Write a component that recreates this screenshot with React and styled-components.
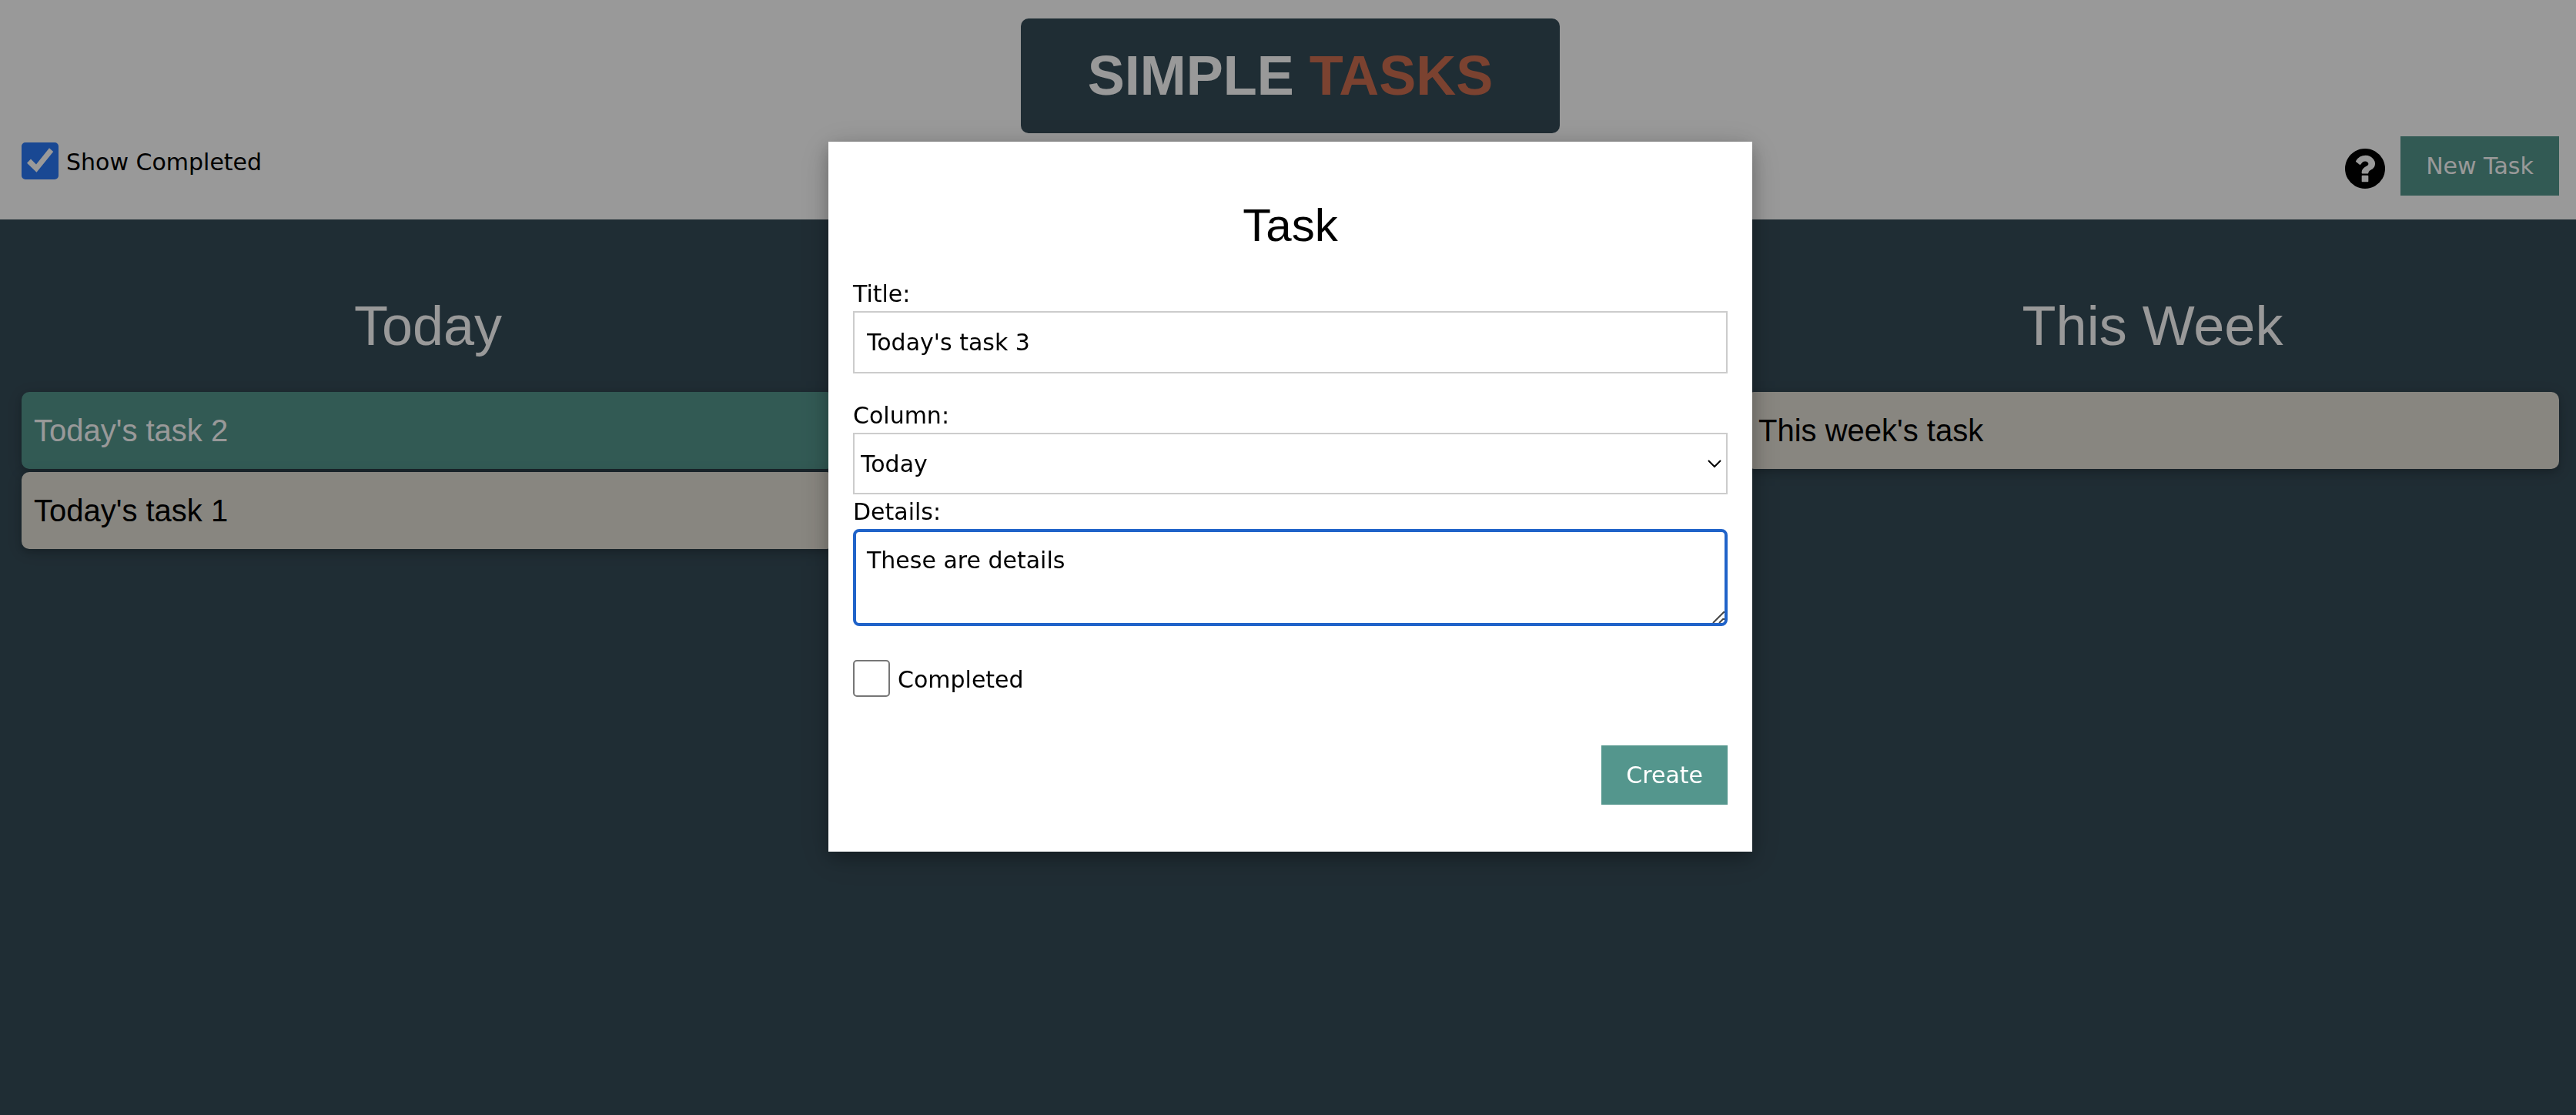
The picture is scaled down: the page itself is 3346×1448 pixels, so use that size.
import React, { useState } from "react";
import styled, { createGlobalStyle } from "styled-components";

const sans = `Verdana, "DejaVu Sans", sans-serif`;
const heading = `Arial, "Liberation Sans", sans-serif`;

const GlobalStyle = createGlobalStyle`
  *, *::before, *::after { box-sizing: border-box; }
  html { background: #354b57; }
  body {
    margin: 0;
    font-family: ${sans};
    font-size: 30px;
    line-height: 45px;
    color: #000;
  }
`;

const Page = styled.div`
  min-height: 100vh;
  background: #354b57;
`;

const Header = styled.header`
  padding: 24px 22px 31px 28px;
  background: #fff;
`;

const Logo = styled.h1`
  width: 700px;
  max-width: 100%;
  margin: 0 auto 4px;
  padding: 20px 0 21px;
  border-radius: 10px;
  background: #354b57;
  color: #fff;
  font: bold 72px/108px ${heading};
  text-align: center;

  span { color: #cd6e50; }
`;

const Toolbar = styled.div`
  display: flex;
  align-items: flex-start;
  justify-content: space-between;
`;

const Filter = styled.div`
  padding-top: 8px;
`;

const Actions = styled.div`
  display: flex;
  align-items: center;
  gap: 20px;
`;

const IconButton = styled.button`
  display: flex;
  margin: 6px 0 0;
  padding: 0;
  border: 0;
  background: none;
  color: #000;
`;

const Button = styled.button`
  min-width: ${(p) => (p.$wide ? "206px" : "0")};
  padding: 16px 32px;
  border: 0;
  background: #54968d;
  color: #fff;
  font: 30px/45px ${sans};
`;

const CheckLabel = styled.label`
  display: flex;
  align-items: center;
  gap: 10px;
`;

const CheckText = styled.span`
  padding-top: 2px;
`;

const CheckCell = styled.span`
  display: grid;

  > * { grid-area: 1 / 1; }
  svg { pointer-events: none; }
`;

const CheckInput = styled.input`
  appearance: none;
  width: 48px;
  height: 48px;
  margin: 0;
  border: 2px solid #767676;
  border-radius: 5px;
  background: #fff;

  &:checked {
    border-color: #2b79f6;
    background: #2b79f6;
  }
`;

const Board = styled.main`
  display: grid;
  grid-template-columns: repeat(3, 1fr);
  gap: 64px;
  padding: 84px 22px 64px 28px;
`;

const Column = styled.section`
  display: flex;
  flex-direction: column;
  gap: 4px;
`;

const ColumnTitle = styled.h2`
  margin: 0 0 28px;
  color: #fff;
  font: 72px/108px ${heading};
  text-align: center;
`;

const Card = styled.article`
  padding: 20px 16px;
  border-radius: 10px;
  background: ${(p) => (p.$done ? "#54968d" : "#e3dfd5")};
  color: ${(p) => (p.$done ? "#fff" : "#000")};
  font: 40px/60px ${heading};
  box-shadow: 0 4px 10px rgba(0, 0, 0, 0.16), 0 4px 20px rgba(0, 0, 0, 0.12);
`;

const Overlay = styled.div`
  position: fixed;
  inset: 0;
  display: flex;
  align-items: flex-start;
  justify-content: center;
  padding: 184px 0 64px 6px;
  overflow: auto;
  background: rgba(0, 0, 0, 0.4);
`;

const Dialog = styled.form`
  display: flex;
  flex-direction: column;
  width: 1200px;
  max-width: 100%;
  padding: 64px 32px 61px;
  background: #fff;
  box-shadow: 0 8px 20px rgba(0, 0, 0, 0.2), 0 8px 40px rgba(0, 0, 0, 0.19);
`;

const DialogTitle = styled.h2`
  margin: 0 0 21px;
  font: 60px/90px ${heading};
  text-align: center;
`;

const fieldText = `
  display: block;
  width: 100%;
  margin: 0;
  border-radius: 0;
  background: #fff;
  color: #000;
  font: 30px/45px ${sans};
  outline: none;
`;

const TextInput = styled.input`
  ${fieldText}
  height: 81px;
  margin-bottom: 32px;
  padding: 16px;
  border: 2px solid #ccc;
`;

const Overlaid = styled.div`
  display: grid;

  > * { grid-area: 1 / 1; }
  svg { pointer-events: none; }
`;

const Chevron = styled.svg`
  place-self: center end;
  margin-right: 8px;
`;

const Grip = styled.svg`
  place-self: end;
  margin: 0 4px 4px 0;
`;

const Select = styled.select`
  ${fieldText}
  appearance: none;
  height: 80px;
  padding: 16px 8px;
  border: 2px solid #ccc;
`;

const TextArea = styled.textarea`
  ${fieldText}
  height: 126px;
  padding: 14px;
  border: 4px solid #2063c9;
  border-radius: 8px;
  resize: none;
`;

const CompletedRow = styled.div`
  padding: 44px 0 63px;
`;

const DialogActions = styled.div`
  display: flex;
  justify-content: flex-end;
`;

function Checkbox({ id, label, defaultChecked = false }) {
  const [checked, setChecked] = useState(defaultChecked);
  return (
    <CheckLabel htmlFor={id}>
      <CheckCell>
        <CheckInput id={id} type="checkbox" checked={checked} onChange={(e) => setChecked(e.target.checked)} />
        {checked && (
          <svg width="48" height="48" viewBox="0 0 48 48" aria-hidden="true">
            <path d="M7 26.7L12 21.5L19 28.5L36 7.2L41.2 12L19.5 38.8Z" fill="#fff" />
          </svg>
        )}
      </CheckCell>
      <CheckText>{label}</CheckText>
    </CheckLabel>
  );
}

function HelpIcon() {
  return (
    <svg width="52" height="52" viewBox="128 128 1536 1536" aria-hidden="true">
      <path
        fill="currentColor"
        fillRule="evenodd"
        d="M1024 1376v-192q0-14-9-23t-23-9h-192q-14 0-23 9t-9 23v192q0 14 9 23t23 9h192q14 0 23-9t9-23zm256-672q0-88-55.5-163t-138.5-116-170-41q-243 0-371 213-15 24 8 42l132 100q7 6 19 6 16 0 25-12 53-68 86-92 34-24 86-24 48 0 85.5 26t37.5 59q0 38-20 61t-68 45q-63 28-115.5 86.5t-52.5 125.5v36q0 14 9 23t23 9h192q14 0 23-9t9-23q0-19 21.5-49.5t54.5-49.5q32-18 49-28.5t46-35 44.5-48 28-60.5 12.5-81zm384 192q0 209-103 385.5t-279.5 279.5-385.5 103-385.5-103-279.5-279.5-103-385.5 103-385.5 279.5-279.5 385.5-103 385.5 103 279.5 279.5 103 385.5z"
      />
    </svg>
  );
}

const columns = [
  { title: "Today", tasks: [{ name: "Today's task 2", done: true }, { name: "Today's task 1" }] },
  { title: "", tasks: [] },
  { title: "This Week", tasks: [{ name: "This week's task" }] },
];

export default function App() {
  return (
    <>
      <GlobalStyle />
      <Page>
        <Header>
          <Logo>SIMPLE <span>TASKS</span></Logo>
          <Toolbar>
            <Filter>
              <Checkbox id="show-completed" label="Show Completed" defaultChecked />
            </Filter>
            <Actions>
              <IconButton type="button"><HelpIcon /></IconButton>
              <Button type="button" $wide>New Task</Button>
            </Actions>
          </Toolbar>
        </Header>
        <Board>
          {columns.map((column, i) => (
            <Column key={i}>
              {column.title && <ColumnTitle>{column.title}</ColumnTitle>}
              {column.tasks.map((task) => (
                <Card key={task.name} $done={task.done}>{task.name}</Card>
              ))}
            </Column>
          ))}
        </Board>
      </Page>
      <Overlay>
        <Dialog role="dialog" aria-labelledby="dialog-title" onSubmit={(e) => e.preventDefault()}>
          <DialogTitle id="dialog-title">Task</DialogTitle>
          <label htmlFor="task-title">Title:</label>
          <TextInput id="task-title" type="text" defaultValue="Today's task 3" />
          <label htmlFor="task-column">Column:</label>
          <Overlaid>
            <Select id="task-column" defaultValue="Today">
              <option>Today</option>
            </Select>
            <Chevron width="18" height="12" viewBox="0 0 18 12" aria-hidden="true">
              <path d="M1 2l8 8 8-8" fill="none" stroke="#000" strokeWidth="2" />
            </Chevron>
          </Overlaid>
          <label htmlFor="task-details">Details:</label>
          <Overlaid>
            <TextArea id="task-details" defaultValue="These are details" />
            <Grip width="16" height="16" viewBox="0 0 16 16" aria-hidden="true">
              <path d="M1 16L15 2h1M9 16l5-5h2" fill="none" stroke="#444" strokeWidth="2" />
            </Grip>
          </Overlaid>
          <CompletedRow>
            <Checkbox id="task-completed" label="Completed" />
          </CompletedRow>
          <DialogActions>
            <Button type="submit">Create</Button>
          </DialogActions>
        </Dialog>
      </Overlay>
    </>
  );
}
